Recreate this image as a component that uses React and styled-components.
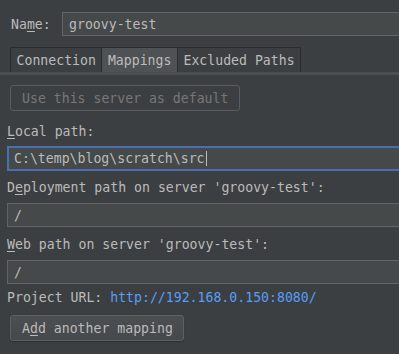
import styled, { createGlobalStyle } from 'styled-components';

const GlobalStyle = createGlobalStyle`
    html, body {
        margin: 0;
        padding: 0;
        background: #3c3f41;
        overflow: hidden;
    }
    body {
        font-family: "DejaVu Sans Mono", "Liberation Mono", monospace;
        font-size: 13.2px;
        color: #bbbbbb;
    }
`

const Panel = styled.div`
    width: 399px;
    height: 354px;
    padding: 12px 0 0 7px;
    box-sizing: border-box;
    display: flex;
    flex-direction: column;
    overflow: hidden;
`

const NameRow = styled.div`
    display: flex;
    align-items: center;
    padding-left: 4px;
    height: 24px;
`

const NameLabel = styled.label`
    width: 51px;
    flex-shrink: 0;
    line-height: 17px;
`

const Mn = styled.span`
    text-decoration: underline;
    text-underline-offset: 2px;
`

const Field = styled.div`
    box-sizing: border-box;
    flex: ${p => p.$grow ? '1' : 'none'};
    width: ${p => p.$grow ? 'auto' : '100%'};
    height: ${p => p.$height || '24px'};
    background: #45494a;
    border: ${p => p.$focused ? '2px solid #4b6eaf' : '1px solid #646464'};
    border-right: none;
    padding-left: ${p => p.$focused ? '5px' : '6px'};
    display: flex;
    align-items: center;
    color: #bbbbbb;
    white-space: nowrap;
`

const Caret = styled.span`
    display: inline-block;
    width: 1px;
    height: 15px;
    background: #bbbbbb;
    margin-left: 1px;
`

const TabRow = styled.div`
    display: flex;
    margin-top: 11px;
    padding-left: 3px;
`

const Tab = styled.div`
    height: 25px;
    box-sizing: border-box;
    padding: 0 5.5px;
    display: flex;
    align-items: center;
    border: 1px solid #2b2b2b;
    border-bottom: none;
    margin-right: -1px;
    background: ${p => p.$active ? '#4e5254' : '#3c3f41'};
`

const TabStrip = styled.div`
    height: 3px;
    margin-left: -7px;
    background: #4b4f51;
`

const Button = styled.div`
    box-sizing: border-box;
    width: ${p => p.$width};
    height: 26px;
    margin-left: 3px;
    padding-left: 11px;
    display: flex;
    align-items: center;
    white-space: nowrap;
    border-radius: 3px;
    border: 1px solid ${p => p.$disabled ? '#5a5d5f' : '#5e6060'};
    background: ${p => p.$disabled ? '#3c3f41' : 'linear-gradient(#4b4f51, #45494b)'};
    color: ${p => p.$disabled ? '#777777' : '#bbbbbb'};
    box-shadow: ${p => p.$disabled ? 'none' : '0 1px 1px rgba(0,0,0,0.25)'};
`

const ButtonRow = styled.div`
    margin-top: ${p => p.$top || '0'};
`

const Label = styled.div`
    line-height: 17px;
    margin-top: ${p => p.$top};
    margin-bottom: ${p => p.$bottom || '7px'};
`

const Link = styled.span`
    color: #589df6;
`

const App = () => {
    return (
        <Panel>
            <GlobalStyle />
            <NameRow>
                <NameLabel>Na<Mn>m</Mn>e:</NameLabel>
                <Field $grow>groovy-test</Field>
            </NameRow>
            <TabRow>
                <Tab>Connection</Tab>
                <Tab $active>Mappings</Tab>
                <Tab>Excluded Paths</Tab>
            </TabRow>
            <TabStrip />
            <ButtonRow $top="10px">
                <Button $disabled $width="230px">Use this server as default</Button>
            </ButtonRow>
            <Label $top="12px" $bottom="6px"><Mn>L</Mn>ocal path:</Label>
            <Field $focused $height="25px">C:\temp\blog\scratch\src<Caret /></Field>
            <Label $top="8px" $bottom="7px">D<Mn>e</Mn>ployment path on server 'groovy-test':</Label>
            <Field>/</Field>
            <Label $top="9px" $bottom="7px"><Mn>W</Mn>eb path on server 'groovy-test':</Label>
            <Field>/</Field>
            <Label $top="5px" $bottom="9px">Project URL: <Link>http://192.168.0.150:8080/</Link></Label>
            <ButtonRow>
                <Button $width="174px">A<Mn>d</Mn>d another mapping</Button>
            </ButtonRow>
        </Panel>
    );
};

export default App;
